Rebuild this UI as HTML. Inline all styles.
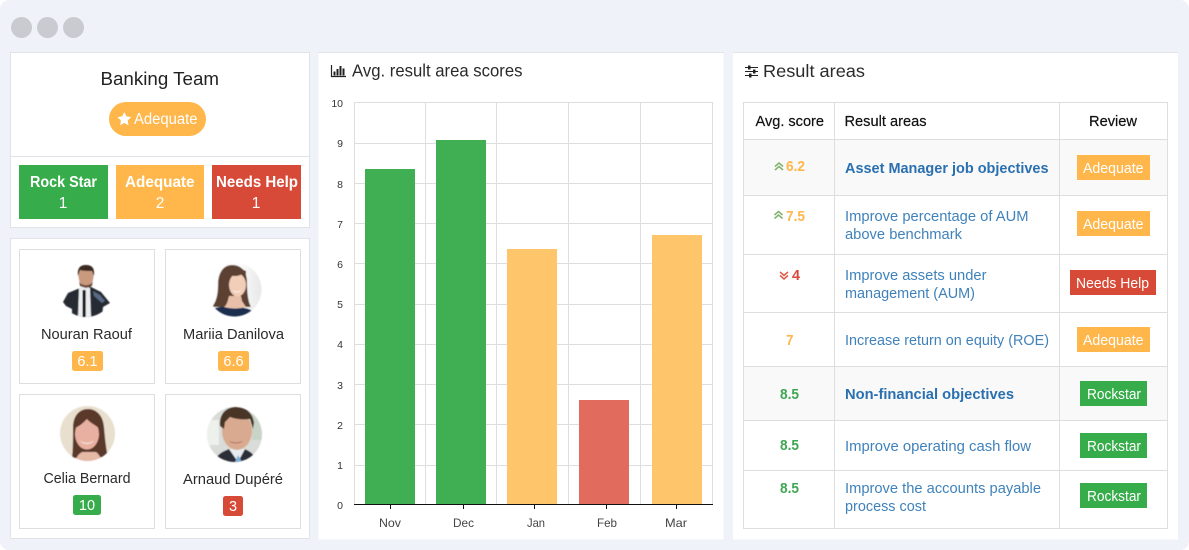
<!DOCTYPE html>
<html><head><meta charset="utf-8"><style>
html,body{margin:0;padding:0;background:#fff;width:1189px;height:550px;overflow:hidden}
svg{display:block}
text{font-family:"Liberation Sans",sans-serif}
.b{font-size:14.5px;fill:#3f82bb}
.bb{font-size:14.5px;fill:#2a70b0;font-weight:bold}
.w{font-size:14.5px;fill:#fff}
.wb{font-size:15.5px;fill:#fff;font-weight:bold}
.n{font-size:14.5px;fill:#2a2a2a}
.h{font-size:14.5px;fill:#111;stroke:#111;stroke-width:.2}
.y{font-size:10.5px;fill:#333;text-anchor:end}
.x{font-size:12px;fill:#444}
.o{font-size:15px;fill:#ffb64a;font-weight:bold}
.g{font-size:15px;fill:#3fa653;font-weight:bold}
.r{font-size:15px;fill:#d9493a;font-weight:bold}
.t{font-size:17.5px;fill:#2a2a2a}
.l{stroke:#dedede;stroke-width:1;fill:none;shape-rendering:crispEdges}
</style></head><body>
<svg width="1189" height="550" viewBox="0 0 1189 550" xmlns="http://www.w3.org/2000/svg">
<defs>
<clipPath id="c1"><circle cx="86" cy="289" r="28"/></clipPath>
<clipPath id="c2"><circle cx="234.500" cy="289.500" r="27"/></clipPath>
<clipPath id="c3"><circle cx="87.500" cy="433.500" r="27.500"/></clipPath>
<clipPath id="c4"><circle cx="234.500" cy="434.500" r="27.500"/></clipPath>
<filter id="s"><feGaussianBlur stdDeviation=".55"/></filter>
<linearGradient id="mg" x1="0" x2="1"><stop offset="0" stop-color="#fff"/><stop offset=".6" stop-color="#fbfbfb"/><stop offset="1" stop-color="#e4e4e4"/></linearGradient>
</defs>
<rect x="0" y="0" width="1189" height="550" rx="9" fill="#eff2f9"/>
<circle cx="21.500" cy="27.500" r="10.500" fill="#c9cbd0"/><circle cx="47.500" cy="27.500" r="10.500" fill="#c9cbd0"/><circle cx="73.500" cy="27.500" r="10.500" fill="#c9cbd0"/>

<!-- left top panel -->
<rect x="10.500" y="52.500" width="299" height="175" fill="#fff" stroke="#e1e3e8" shape-rendering="crispEdges"/>
<line x1="11" x2="309" y1="156.500" y2="156.500" stroke="#e1e3e8" shape-rendering="crispEdges"/>
<text x="100.500" y="85" font-size="18.500" fill="#222" textLength="118.500" lengthAdjust="spacingAndGlyphs">Banking Team</text>
<rect x="109" y="102" width="97" height="34" rx="17" fill="#ffb64a"/>
<path d="M124.300 112l2.100 4.400 4.800.7-3.500 3.400.8 4.800-4.200-2.300-4.200 2.300.8-4.800-3.500-3.400 4.800-.7z" fill="#fff"/>
<text x="134" y="124" font-size="15.500" fill="#fff" textLength="63.500" lengthAdjust="spacingAndGlyphs">Adequate</text>
<rect x="19" y="165" width="89" height="54" fill="#37ac4a"/>
<rect x="116" y="165" width="88" height="54" fill="#ffb64a"/>
<rect x="212" y="165" width="89" height="54" fill="#d84a38"/>
<text class="wb" x="30" y="187" textLength="67" lengthAdjust="spacingAndGlyphs">Rock Star</text>
<text class="wb" x="125" y="187" textLength="69.500" lengthAdjust="spacingAndGlyphs">Adequate</text>
<text class="wb" x="216" y="187" textLength="82" lengthAdjust="spacingAndGlyphs">Needs Help</text>
<text x="63" y="208" font-size="15.500" fill="#fff" text-anchor="middle">1</text>
<text x="160" y="208" font-size="15.500" fill="#fff" text-anchor="middle">2</text>
<text x="256" y="208" font-size="15.500" fill="#fff" text-anchor="middle">1</text>

<!-- left bottom panel -->
<rect x="10.500" y="238.500" width="299" height="300" fill="#fff" stroke="#e1e3e8" shape-rendering="crispEdges"/>
<rect class="l" x="19.500" y="249.500" width="135" height="134"/>
<rect class="l" x="165.500" y="249.500" width="135" height="134"/>
<rect class="l" x="19.500" y="394.500" width="135" height="134"/>
<rect class="l" x="165.500" y="394.500" width="135" height="134"/>

<!-- avatars -->
<g filter="url(#s)">
<g clip-path="url(#c1)">
<path d="M63 302l5-9 12-5 4-2h5l4 2 8 4 9 11-7 4-1 10H72v-8l-6-3z" fill="#262a31"/>
<path d="M79 288l6-2 5 2 1 29H78z" fill="#eceef0"/>
<rect x="82.500" y="290" width="3.200" height="27" fill="#15171c"/>
<path d="M93 291l7 4 5 6-3 2-8-7z" fill="#5a6b84"/>
<ellipse cx="86" cy="276" rx="7.500" ry="10" fill="#c99a7e"/>
<path d="M79 280c1 7 13 7 14 0l-1 6-6 2-6-2z" fill="#6a4a38"/>
<path d="M78 276c-1-9 3-11 8-11s9 2 8 11l-2-5c-3 0-9 0-12-1z" fill="#3a2a22"/>
</g>
<g clip-path="url(#c2)">
<rect x="205" y="260" width="60" height="60" fill="url(#mg)"/>
<path d="M212 307c4-5 6-12 6-22 0-13 6-20 14-20 9 0 15 6 15 17 0 10 1 20 4 25z" fill="#5c3f30"/>
<path d="M208 320v-8c5-4 9-5 15-5h12c6 0 14 1 19 5v8z" fill="#1e2d50"/>
<path d="M224 307c3-2 4-7 5-11h12l1 5 4 6c-7 2-15 2-22 0z" fill="#e8bfa8"/>
<ellipse cx="237.500" cy="285" rx="8.500" ry="11.500" fill="#f2cdb8"/>
<path d="M230 275c4 2 10 1 14-2l2 6v-8l-7-3-7 3z" fill="#5c3f30"/>
<path d="M233 290c2 2 6 2 8 0-1 3-7 3-8 0z" fill="#fff"/>
</g>
<g clip-path="url(#c3)">
<rect x="58" y="404" width="60" height="60" fill="#e8dfcf"/>
<path d="M72 458c1-8 1-18 1-30 0-13 7-19 15-19s15 6 16 18c1 11 2 22 4 30z" fill="#5a382a"/>
<path d="M76 462c0-6 3-8 6-10h14c3 2 5 6 6 10z" fill="#e6b8a6"/>
<ellipse cx="87" cy="434" rx="12" ry="15.500" fill="#e8b0a0"/>
<path d="M75 428c5-2 9-6 12-9 2 3 8 6 12 9l-1-12-11-4-10 4z" fill="#5a382a"/>
<path d="M80 440c3 4 11 4 14 0-2 5-12 5-14 0z" fill="#fff"/>
</g>
<g clip-path="url(#c4)">
<rect x="205" y="405" width="60" height="60" fill="#d9dcd8"/>
<rect x="207" y="420" width="12" height="25" fill="#eef0ec"/><rect x="252" y="410" width="10" height="30" fill="#c9d4c8"/>
<path d="M214 464c1-8 7-12 15-15h15c7 2 12 7 13 15z" fill="#2a2e38"/>
<path d="M229 449l9 13 7-13z" fill="#e8ecf0"/><path d="M238 455l4 7h-7z" fill="#7fb0d8"/>
<ellipse cx="237" cy="431" rx="15" ry="19" fill="#d9aa90"/>
<path d="M220 426c-1-12 6-19 16-19s17 6 18 16l-1 6-3-10c-7 1-15 0-20-2l-5 5-1 7z" fill="#4a3428"/>
<path d="M229 441c4 2 10 2 14 0-2 3-12 3-14 0z" fill="#a0564a"/>
</g>
</g>

<text class="n" x="41" y="339" textLength="91" lengthAdjust="spacingAndGlyphs">Nouran Raouf</text>
<text class="n" x="183" y="339" textLength="101" lengthAdjust="spacingAndGlyphs">Mariia Danilova</text>
<text class="n" x="43.500" y="483" textLength="87" lengthAdjust="spacingAndGlyphs">Celia Bernard</text>
<text class="n" x="183" y="484" textLength="100" lengthAdjust="spacingAndGlyphs">Arnaud Dupéré</text>
<rect x="72" y="351" width="31" height="20" rx="2.500" fill="#ffb64a"/>
<rect x="218" y="351" width="31" height="20" rx="2.500" fill="#ffb64a"/>
<rect x="73" y="495" width="28" height="20" rx="2.500" fill="#37ac4a"/>
<rect x="223" y="496" width="20" height="20" rx="2.500" fill="#d84a38"/>
<text class="w" x="87.500" y="366" text-anchor="middle">6.1</text>
<text class="w" x="233.500" y="366" text-anchor="middle">6.6</text>
<text class="w" x="87" y="510" text-anchor="middle">10</text>
<text class="w" x="233" y="511" text-anchor="middle">3</text>

<!-- middle panel -->
<rect x="318.500" y="52.500" width="405" height="487" fill="#fff"/>
<line x1="318" x2="724" y1="52.500" y2="52.500" stroke="#e1e3e8" shape-rendering="crispEdges"/>
<path d="M331.500 65v11.500h14.500" fill="none" stroke="#222" stroke-width="1.200"/>
<path d="M333.500 71.500h2v4h-2zM336.500 69h2v6.500h-2zM339.500 66h2v9.500h-2zM342.500 68.500h2v7h-2z" fill="#222"/>
<text class="t" x="352" y="76.500" textLength="170.500" lengthAdjust="spacingAndGlyphs">Avg. result area scores</text>

<g class="l">
<path d="M354.500 102.500H712.500M354.500 143.500H712.500M354.500 183.500H712.500M354.500 223.500H712.500M354.500 263.500H712.500M354.500 304.500H712.500M354.500 344.500H712.500M354.500 384.500H712.500M354.500 424.500H712.500M354.500 465.500H712.500"/>
<path d="M354.500 102V504M425.500 102V504M496.500 102V504M568.500 102V504M640.500 102V504M712.500 102V504"/>
</g>
<rect x="365" y="169" width="50" height="335" fill="#40ae52"/>
<rect x="436" y="140" width="50" height="364" fill="#40ae52"/>
<rect x="507" y="249" width="50" height="255" fill="#fec56b"/>
<rect x="579" y="400" width="50" height="104" fill="#e16b5c"/>
<rect x="652" y="235" width="50" height="269" fill="#fec56b"/>
<path d="M354 504.500H713M390.500 505v4M463.500 505v4M534.500 505v4M606.500 505v4M676.500 505v4" stroke="#111" fill="none" shape-rendering="crispEdges"/>
<g>
<text class="y" x="343" y="107">10</text><text class="y" x="343" y="147">9</text><text class="y" x="343" y="188">8</text><text class="y" x="343" y="228">7</text><text class="y" x="343" y="268">6</text><text class="y" x="343" y="308">5</text><text class="y" x="343" y="348">4</text><text class="y" x="343" y="389">3</text><text class="y" x="343" y="429">2</text><text class="y" x="343" y="469">1</text><text class="y" x="343" y="509">0</text>
</g>
<text class="x" x="379" y="527" textLength="22" lengthAdjust="spacingAndGlyphs">Nov</text>
<text class="x" x="453" y="527" textLength="21" lengthAdjust="spacingAndGlyphs">Dec</text>
<text class="x" x="527" y="527" textLength="18" lengthAdjust="spacingAndGlyphs">Jan</text>
<text class="x" x="597" y="527" textLength="20" lengthAdjust="spacingAndGlyphs">Feb</text>
<text class="x" x="665" y="527" textLength="22" lengthAdjust="spacingAndGlyphs">Mar</text>

<!-- right panel -->
<rect x="733" y="52.500" width="445" height="487" fill="#fff"/>
<line x1="733" x2="1178" y1="52.500" y2="52.500" stroke="#e1e3e8" shape-rendering="crispEdges"/>
<path d="M745 67.500h13M745 71.500h13M745 75.500h13" stroke="#222" stroke-width="1.100" fill="none"/>
<path d="M748 65.500h2.500v4H748zM753 69.500h2.500v4H753zM749 73.500h2.500v4H749z" fill="#222"/>
<text class="t" x="763" y="77" textLength="102" lengthAdjust="spacingAndGlyphs">Result areas</text>

<rect x="744" y="140" width="423" height="55" fill="#f9f9f9"/>
<rect x="744" y="367" width="423" height="53" fill="#f9f9f9"/>
<g class="l">
<rect x="743.500" y="102.500" width="424" height="426"/>
<path d="M834.500 102V529M1059.500 102V529M744 139.500H1167M744 195.500H1167M744 254.500H1167M744 312.500H1167M744 366.500H1167M744 420.500H1167M744 470.500H1167"/>
</g>
<text class="h" x="755.500" y="126" textLength="68.500" lengthAdjust="spacingAndGlyphs">Avg. score</text>
<text class="h" x="844.500" y="126" textLength="82" lengthAdjust="spacingAndGlyphs">Result areas</text>
<text class="h" x="1089" y="126" textLength="48" lengthAdjust="spacingAndGlyphs">Review</text>

<path d="M775 166.500l4-3.500 4 3.500M775 170l4-3.500 4 3.500" fill="none" stroke="#7fb26a" stroke-width="1.500"/>
<text class="o" x="786" y="171" textLength="19" lengthAdjust="spacingAndGlyphs">6.2</text>
<path d="M774.500 215l4-3.500 4 3.500M774.500 218.500l4-3.500 4 3.500" fill="none" stroke="#7fb26a" stroke-width="1.500"/>
<text class="o" x="786" y="221" textLength="19" lengthAdjust="spacingAndGlyphs">7.5</text>
<path d="M780 272l4 3.500 4-3.500M780 275.500l4 3.500 4-3.500" fill="none" stroke="#dd5a48" stroke-width="1.500"/>
<text class="r" x="792" y="280" textLength="8" lengthAdjust="spacingAndGlyphs">4</text>
<text class="o" x="786" y="345" textLength="7.500" lengthAdjust="spacingAndGlyphs">7</text>
<text class="g" x="780" y="399" textLength="19" lengthAdjust="spacingAndGlyphs">8.5</text>
<text class="g" x="780" y="450" textLength="19" lengthAdjust="spacingAndGlyphs">8.5</text>
<text class="g" x="780" y="493" textLength="19" lengthAdjust="spacingAndGlyphs">8.5</text>

<text class="bb" x="845" y="173" textLength="203.500" lengthAdjust="spacingAndGlyphs">Asset Manager job objectives</text>
<text class="b" x="845" y="221" textLength="183.500" lengthAdjust="spacingAndGlyphs">Improve percentage of AUM</text>
<text class="b" x="845" y="239" textLength="117" lengthAdjust="spacingAndGlyphs">above benchmark</text>
<text class="b" x="845" y="280" textLength="141.500" lengthAdjust="spacingAndGlyphs">Improve assets under</text>
<text class="b" x="845" y="298" textLength="130" lengthAdjust="spacingAndGlyphs">management (AUM)</text>
<text class="b" x="845" y="345" textLength="204" lengthAdjust="spacingAndGlyphs">Increase return on equity (ROE)</text>
<text class="bb" x="845" y="399" textLength="169" lengthAdjust="spacingAndGlyphs">Non-financial objectives</text>
<text class="b" x="845" y="451" textLength="186" lengthAdjust="spacingAndGlyphs">Improve operating cash flow</text>
<text class="b" x="845" y="493" textLength="196" lengthAdjust="spacingAndGlyphs">Improve the accounts payable</text>
<text class="b" x="845" y="511" textLength="81" lengthAdjust="spacingAndGlyphs">process cost</text>

<rect x="1077" y="155" width="73" height="25" fill="#ffb64a"/>
<rect x="1077" y="211" width="73" height="25" fill="#ffb64a"/>
<rect x="1070" y="270" width="86" height="25" fill="#d84a38"/>
<rect x="1077" y="327" width="73" height="25" fill="#ffb64a"/>
<rect x="1080" y="381" width="67" height="25" fill="#37ac4a"/>
<rect x="1080" y="433" width="67" height="25" fill="#37ac4a"/>
<rect x="1080" y="483" width="67" height="25" fill="#37ac4a"/>
<text class="w" x="1083" y="173" textLength="60.500" lengthAdjust="spacingAndGlyphs">Adequate</text>
<text class="w" x="1083" y="229" textLength="60.500" lengthAdjust="spacingAndGlyphs">Adequate</text>
<text class="w" x="1076" y="288" textLength="73" lengthAdjust="spacingAndGlyphs">Needs Help</text>
<text class="w" x="1083" y="345" textLength="60.500" lengthAdjust="spacingAndGlyphs">Adequate</text>
<text class="w" x="1087" y="399" textLength="54" lengthAdjust="spacingAndGlyphs">Rockstar</text>
<text class="w" x="1087" y="451" textLength="54" lengthAdjust="spacingAndGlyphs">Rockstar</text>
<text class="w" x="1087" y="501" textLength="54" lengthAdjust="spacingAndGlyphs">Rockstar</text>
</svg>
</body></html>
